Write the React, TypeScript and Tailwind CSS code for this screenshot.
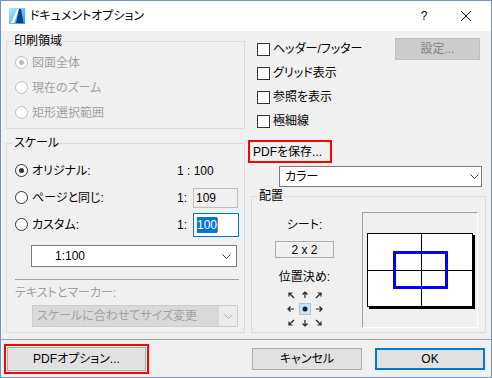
import React from "react";

const FONT = "font-['Liberation_Sans','Noto_Sans_CJK_JP',sans-serif] [font-feature-settings:'palt']";

function Radio({ checked, disabled }: { checked?: boolean; disabled?: boolean }) {
  return (
    <span
      className={
        "flex h-[13px] w-[13px] shrink-0 items-center justify-center rounded-full border bg-white " +
        (disabled ? "border-[#bcbcbc]" : "border-[#333333]")
      }
    >
      {checked ? (
        <span className={"h-[5px] w-[5px] rounded-full " + (disabled ? "bg-[#bcbcbc]" : "bg-[#333333]")} />
      ) : null}
    </span>
  );
}

function Checkbox({ label }: { label: string }) {
  return (
    <div className="flex h-[24px] items-center">
      <span className="h-[13px] w-[13px] border border-[#333333] bg-white" />
      <span className="ml-[3px]">{label}</span>
    </div>
  );
}

function Chevron({ color = "#444444" }: { color?: string }) {
  return (
    <svg width="9" height="5" viewBox="0 0 9 5">
      <path d="M0.5 0.5 L4.5 4.5 L8.5 0.5" fill="none" stroke={color} strokeWidth="1" />
    </svg>
  );
}

function AppIcon() {
  return (
    <svg width="16" height="16" viewBox="0 0 16 16">
      <defs>
        <linearGradient id="ic" x1="0" y1="0" x2="1" y2="1">
          <stop offset="0" stopColor="#b8ecff" />
          <stop offset="1" stopColor="#1e9be0" />
        </linearGradient>
      </defs>
      <rect x="0" y="0" width="16" height="16" fill="url(#ic)" />
      <polygon points="2,15 5,15 10,1 8,1" fill="#ffffff" />
      <polygon points="10,1 12,1 14.5,15 7,15" fill="#0b3f86" />
    </svg>
  );
}

function Arrows() {
  const s = "#222222";
  return (
    <svg width="42" height="42" viewBox="0 0 42 42">
      <rect x="15.5" y="15.5" width="11" height="11" fill="#cce4f7" stroke="#99c9ef" />
      <circle cx="21" cy="21" r="2.5" fill="#222222" />
      <g fill="none" stroke={s} strokeWidth="1.2">
        <path d="M21 4 V10 M18.5 6.5 L21 4 L23.5 6.5" />
        <path d="M21 32 V38 M18.5 35.5 L21 38 L23.5 35.5" />
        <path d="M4 21 H10 M6.5 18.5 L4 21 L6.5 23.5" />
        <path d="M32 21 H38 M35.5 18.5 L38 21 L35.5 23.5" />
        <path d="M5 5 L10 10 M5 8.5 V5 H8.5" />
        <path d="M37 5 L32 10 M37 8.5 V5 H33.5" />
        <path d="M5 37 L10 32 M5 33.5 V37 H8.5" />
        <path d="M37 37 L32 32 M37 33.5 V37 H33.5" />
      </g>
    </svg>
  );
}

export default function App() {
  return (
    <div className={"flex h-[378px] w-[492px] flex-col border border-[#7491b6] bg-[#f0f0f0] text-[12px] leading-[16px] text-black " + FONT}>
      {/* title bar */}
      <div className="flex h-[30px] shrink-0 items-center bg-white">
        <span className="ml-[8px]">
          <AppIcon />
        </span>
        <span className="ml-[5px]">ドキュメントオプション</span>
        <span className="ml-auto w-[14px] text-center">?</span>
        <svg className="ml-[30px] mr-[20px]" width="10" height="10" viewBox="0 0 10 10">
          <path d="M0 0 L10 10 M10 0 L0 10" stroke="#111111" strokeWidth="1" />
        </svg>
      </div>

      <div className="flex h-[308px] shrink-0">
        {/* left column */}
        <div className="ml-[5px] flex w-[239px] flex-col">
          <fieldset className="mt-[2px] h-[96px] border border-[#dcdcdc]">
            <legend className="ml-[6px] px-[1px]">印刷領域</legend>
            <div className="flex flex-col pl-[8px] pt-[1px] text-[#a0a0a0]">
              <div className="flex h-[25px] items-center">
                <Radio checked disabled />
                <span className="ml-[4px]">図面全体</span>
              </div>
              <div className="flex h-[25px] items-center">
                <Radio disabled />
                <span className="ml-[4px]">現在のズーム</span>
              </div>
              <div className="flex h-[25px] items-center">
                <Radio disabled />
                <span className="ml-[4px]">矩形選択範囲</span>
              </div>
            </div>
          </fieldset>

          <fieldset className="mt-[6px] h-[198px] border border-[#dcdcdc]">
            <legend className="ml-[6px] px-[1px]">スケール</legend>
            <div className="flex flex-col pl-[8px] pt-[6px]">
              <div className="flex h-[27px] items-center">
                <div className="flex w-[162px] items-center">
                  <Radio checked />
                  <span className="ml-[4px]">オリジナル:</span>
                </div>
                <span>1 : 100</span>
              </div>
              <div className="flex h-[27px] items-center">
                <div className="flex w-[162px] items-center">
                  <Radio />
                  <span className="ml-[4px]">ページと同じ:</span>
                </div>
                <span className="w-[16px]">1:</span>
                <div className="flex h-[20px] w-[45px] items-center border border-[#bfbfbf] bg-[#f0f0f0] pl-[2px]">109</div>
              </div>
              <div className="flex h-[27px] items-center">
                <div className="flex w-[162px] items-center">
                  <Radio />
                  <span className="ml-[4px]">カスタム:</span>
                </div>
                <span className="w-[16px]">1:</span>
                <div className="flex h-[24px] w-[46px] items-center border border-[#0078d7] bg-white pl-[3px]">
                  <span className="bg-[#0078d7] text-white">100</span>
                  <span className="h-[14px] w-px bg-[#d26a00]" />
                </div>
              </div>

              <div className="ml-[16px] mt-[7px] flex h-[22px] w-[206px] items-center border border-[#7a7a7a] bg-white pl-[23px] pr-[5px]">
                <span>1:100</span>
                <span className="ml-auto">
                  <Chevron />
                </span>
              </div>

              <div className="mt-[12px] h-px w-[224px] bg-[#a0a0a0]" />
              <div className="mt-[5px] text-[#a0a0a0]">テキストとマーカー:</div>

              <div className="ml-[17px] mt-[4px] flex h-[22px] w-[206px] border border-[#cccccc] bg-[#cccccc]">
                <div className="flex flex-1 items-center bg-[#d9d9d9] pl-[4px] text-[#a0a0a0]">スケールに合わせてサイズ変更</div>
                <div className="flex w-[18px] items-center justify-center bg-[#ebebeb]">
                  <Chevron color="#b0b0b0" />
                </div>
              </div>
            </div>
          </fieldset>
        </div>

        {/* right column */}
        <div className="ml-[3px] flex w-[239px] flex-col">
          <div className="mt-[6px] flex">
            <div className="flex flex-col pl-[9px]">
              <Checkbox label="ヘッダー/フッター" />
              <Checkbox label="グリッド表示" />
              <Checkbox label="参照を表示" />
              <Checkbox label="極細線" />
            </div>
            <div className="ml-auto mr-[7px] mt-[1px] flex h-[22px] w-[85px] items-center justify-center border border-[#bfbfbf] bg-[#cccccc] text-[#838383]">
              設定...
            </div>
          </div>

          <div className="mt-[7px] flex h-[23px] w-[84px] items-center border-2 border-[#ff0000] pl-[3px]">PDFを保存...</div>

          <div className="ml-[31px] mt-[3px] flex h-[21px] w-[203px] items-center border border-[#7a7a7a] bg-white pl-[5px] pr-[2px]">
            <span>カラー</span>
            <span className="ml-auto">
              <Chevron />
            </span>
          </div>

          <fieldset className="ml-[3px] mt-[1px] h-[145px] w-[235px] border border-[#dcdcdc]">
            <legend className="ml-[6px] px-[1px]">配置</legend>
            <div className="flex">
              <div className="flex w-[105px] flex-col items-center">
                <div className="mt-[13px]">シート:</div>
                <div className="mt-[8px] flex h-[17px] w-[59px] items-center justify-center border border-[#adadad]">2 x 2</div>
                <div className="mt-[11px]">位置決め:</div>
                <div className="mt-[3px]">
                  <Arrows />
                </div>
              </div>
              <div className="ml-[5px] mt-[8px] h-[116px] w-[116px] border border-b-white border-l-[#a0a0a0] border-r-white border-t-[#a0a0a0]">
                <svg width="114" height="114" viewBox="0 0 114 114">
                  <rect x="6" y="22" width="106" height="74" fill="#000000" />
                  <rect x="4.5" y="20.5" width="105" height="73" fill="#ffffff" stroke="#000000" />
                  <path d="M58.5 21 V93 M5 57.5 H109" stroke="#000000" strokeWidth="1" />
                  <rect x="31.5" y="39.5" width="52" height="35" fill="none" stroke="#0000ff" strokeWidth="3" />
                </svg>
              </div>
            </div>
          </fieldset>
        </div>
      </div>

      <div className="h-px shrink-0 bg-[#a0a0a0]" />

      {/* buttons */}
      <div className="flex flex-1 items-start pl-[3px] pt-[4px]">
        <div className="h-[30px] w-[145px] border-2 border-[#ff0000] p-px">
          <div className="flex h-full w-full items-center justify-center border border-[#adadad] bg-[#e1e1e1]">PDFオプション...</div>
        </div>
        <div className="ml-[103px] mt-[4px] flex h-[22px] w-[110px] items-center justify-center border border-[#adadad] bg-[#e1e1e1]">
          キャンセル
        </div>
        <div className="ml-[13px] mt-[4px] flex h-[22px] w-[110px] items-center justify-center border-2 border-[#0078d7] bg-[#e1e1e1]">
          OK
        </div>
      </div>
    </div>
  );
}
